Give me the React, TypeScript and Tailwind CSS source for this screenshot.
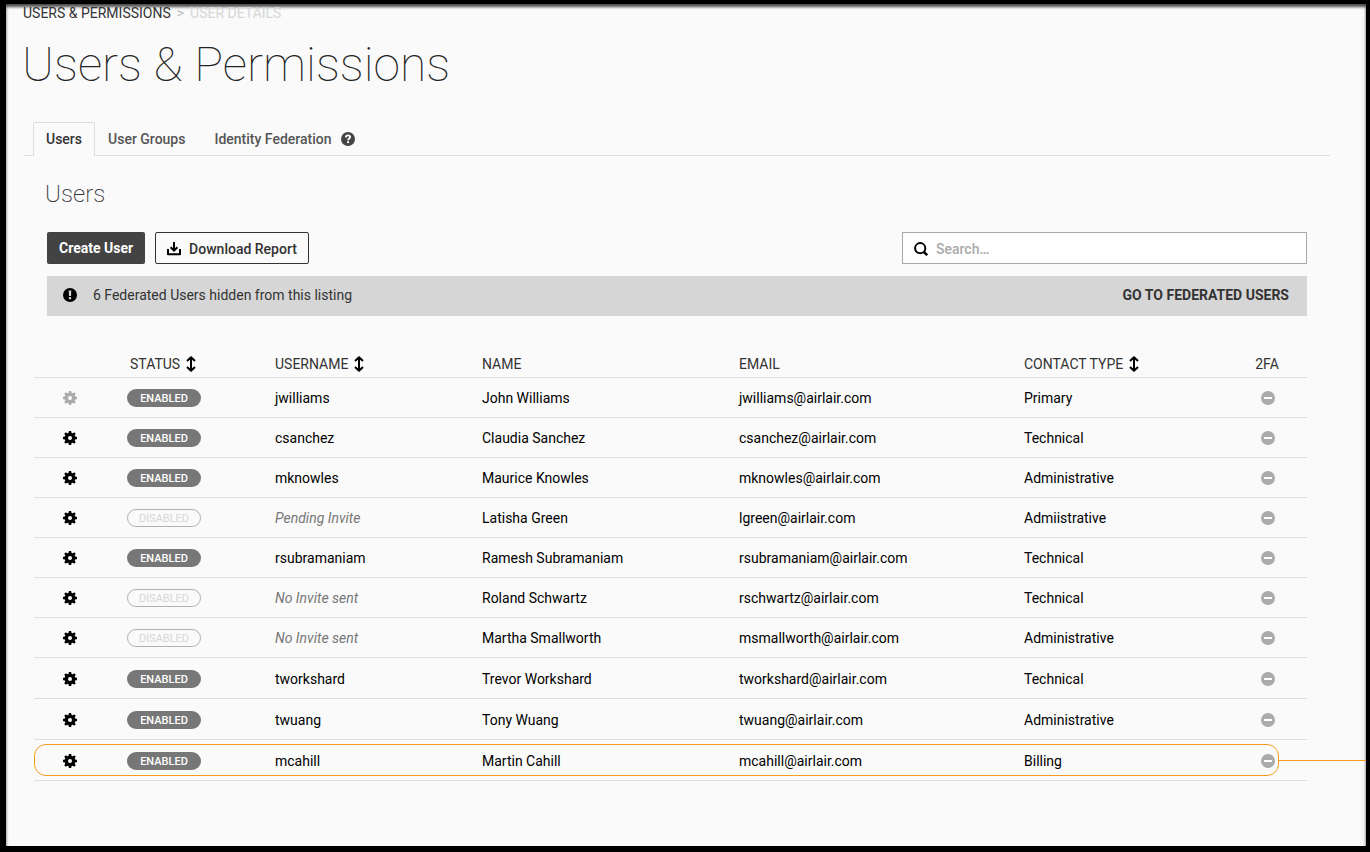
import React from 'react';

type User = {
  username: string;
  invite?: boolean;
  enabled: boolean;
  name: string;
  email: string;
  contact: string;
  locked?: boolean;
  highlighted?: boolean;
  tall?: boolean;
};

const users: User[] = [
  { username: 'jwilliams', enabled: true, name: 'John Williams', email: 'jwilliams@airlair.com', contact: 'Primary', locked: true },
  { username: 'csanchez', enabled: true, name: 'Claudia Sanchez', email: 'csanchez@airlair.com', contact: 'Technical' },
  { username: 'mknowles', enabled: true, name: 'Maurice Knowles', email: 'mknowles@airlair.com', contact: 'Administrative' },
  { username: 'Pending Invite', invite: true, enabled: false, name: 'Latisha Green', email: 'lgreen@airlair.com', contact: 'Admiistrative' },
  { username: 'rsubramaniam', enabled: true, name: 'Ramesh Subramaniam', email: 'rsubramaniam@airlair.com', contact: 'Technical' },
  { username: 'No Invite sent', invite: true, enabled: false, name: 'Roland Schwartz', email: 'rschwartz@airlair.com', contact: 'Technical' },
  { username: 'No Invite sent', invite: true, enabled: false, name: 'Martha Smallworth', email: 'msmallworth@airlair.com', contact: 'Administrative' },
  { username: 'tworkshard', enabled: true, name: 'Trevor Workshard', email: 'tworkshard@airlair.com', contact: 'Technical', tall: true },
  { username: 'twuang', enabled: true, name: 'Tony Wuang', email: 'twuang@airlair.com', contact: 'Administrative', tall: true },
  { username: 'mcahill', enabled: true, name: 'Martin Cahill', email: 'mcahill@airlair.com', contact: 'Billing', tall: true, highlighted: true },
];

const teeth = [0, 45, 90, 135, 180, 225, 270, 315];

function GearIcon() {
  return (
    <svg viewBox="0 0 14 14" className="block size-3.5" aria-hidden="true">
      {teeth.map((angle) => (
        <path key={angle} d="M5.2 3 L5.8 0.3 Q5.9 0 6.2 0 H7.8 Q8.1 0 8.2 0.3 L8.8 3 Z" fill="currentColor" transform={`rotate(${angle} 7 7)`} />
      ))}
      <circle cx="7" cy="7" r="3.6" fill="none" stroke="currentColor" strokeWidth="3.2" />
    </svg>
  );
}

function SortIcon() {
  return (
    <svg viewBox="0 0 10 16" className="block h-4 w-2.5" fill="none" stroke="#000" strokeWidth="2" aria-hidden="true">
      <path d="M5 2V14M1 5L5 1.2L9 5M1 11L5 14.8L9 11" strokeLinejoin="round" />
    </svg>
  );
}

function MinusIcon() {
  return (
    <svg viewBox="0 0 14 14" className="mx-auto block size-3.5" role="img" aria-label="Off">
      <circle cx="7" cy="7" r="7" fill="#ababab" />
      <rect x="3" y="6" width="8" height="2" rx="0.3" fill="#fff" />
    </svg>
  );
}

function HelpIcon() {
  return (
    <svg viewBox="0 0 14 14" className="block size-3.5" aria-hidden="true">
      <circle cx="7" cy="7" r="7" fill="#444" />
      <path d="M4.8 5.4C4.9 4 5.8 3.4 7 3.4C8.3 3.4 9.2 4.1 9.2 5.2C9.2 6.6 7.1 6.6 7.1 8.2" fill="none" stroke="#fff" strokeWidth="1.8" />
      <rect x="6.1" y="9.2" width="2" height="1.9" fill="#fff" />
    </svg>
  );
}

function AlertIcon() {
  return (
    <svg viewBox="0 0 14 14" className="block size-3.5" aria-hidden="true">
      <circle cx="7" cy="7" r="7" fill="#000" />
      <path d="M5.7 2.4H8.3L8 8H6Z" fill="#d6d6d6" />
      <rect x="5.9" y="9" width="2.2" height="2.2" rx="0.5" fill="#d6d6d6" />
    </svg>
  );
}

function DownloadIcon() {
  return (
    <svg viewBox="0 0 14 14" className="block size-3.5" fill="none" stroke="#000" strokeWidth="2" aria-hidden="true">
      <path d="M1 7V12.2H13V7" strokeLinejoin="round" />
      <path d="M7 0V8.2M3.6 5.2L7 8.6L10.4 5.2" />
    </svg>
  );
}

function SearchIcon() {
  return (
    <svg viewBox="0 0 14 14" className="block size-3.5" fill="none" stroke="#000" strokeWidth="2" aria-hidden="true">
      <circle cx="6.2" cy="6.2" r="5.1" />
      <path d="M9.8 9.8L13.2 13.2" strokeWidth="2.4" />
    </svg>
  );
}

function SortButton({ children }: { children: React.ReactNode }) {
  return (
    <button type="button" className="flex items-center gap-1.5 uppercase">
      {children}
      <SortIcon />
    </button>
  );
}

function Status({ enabled }: { enabled: boolean }) {
  return enabled ? (
    <span className="flex h-[18px] w-[74px] items-center justify-center rounded-full bg-[#777] pt-0.5 text-[11px] leading-4 font-medium text-white">ENABLED</span>
  ) : (
    <span className="flex h-[18px] w-[74px] items-center justify-center rounded-full border border-[#b0b0b0] pt-0.5 text-[11px] leading-4 text-[#d6d6d6]">DISABLED</span>
  );
}

function UserRow({ user }: { user: User }) {
  const cell = user.tall ? 'h-[41px] border-b border-[#dedede] p-0 pt-px' : 'h-10 border-b border-[#dedede] p-0';
  return (
    <tr className="relative">
      <td className={cell}>
        <button type="button" disabled={user.locked} aria-label={`Settings for ${user.name}`} className={user.locked ? 'ml-[29px] block text-[#ababab]' : 'ml-[29px] block text-black'}>
          <GearIcon />
        </button>
        {user.highlighted && (
          <>
            <span className="pointer-events-none absolute top-1 right-7 bottom-[5px] left-0 rounded-xl border border-[#f39c1f]" />
            <span className="pointer-events-none absolute top-5 right-[-59px] h-px w-[87px] bg-[#f39c1f]" />
          </>
        )}
      </td>
      <td className={cell}>
        <Status enabled={user.enabled} />
      </td>
      <td className={cell}>{user.invite ? <em className="text-[#777]">{user.username}</em> : user.username}</td>
      <td className={cell}>{user.name}</td>
      <td className={cell}>{user.email}</td>
      <td className={cell}>{user.contact}</td>
      <td className={cell}>
        <MinusIcon />
      </td>
    </tr>
  );
}

export default function App() {
  return (
    <div className="min-h-screen overflow-hidden border-t-4 border-r-4 border-b-6 border-l-6 border-black bg-[#fafafa] pb-[65px] pl-[18px] font-['Roboto',sans-serif] text-sm text-black shadow-[inset_0_3px_3px_rgba(0,0,0,0.7)]">
      <nav aria-label="Breadcrumb" className="-ml-px flex h-[18px] items-center gap-1.5 text-[#d6d6d6]">
        <a href="#users" className="text-[#333]">USERS &amp; PERMISSIONS</a>
        <span className="text-[#bbb]">&gt;</span>
        <span>USER DETAILS</span>
      </nav>
      <h1 className="mt-[11px] -ml-0.5 text-5xl leading-16 font-thin text-[#222]">Users &amp; Permissions</h1>

      <div role="tablist" className="mt-[25px] mr-9 flex border-b border-[#dedede] pl-[9px] font-medium text-[#555]">
        <button type="button" role="tab" aria-selected="true" className="-mb-px h-[34px] rounded-t-xs border border-b-0 border-[#dedede] bg-[#fafafa] px-3 pb-px text-[#333]">
          Users
        </button>
        <button type="button" role="tab" aria-selected="false" className="px-[13px]">
          User Groups
        </button>
        <button type="button" role="tab" aria-selected="false" className="flex items-center gap-2.5 px-4">
          Identity Federation
          <HelpIcon />
        </button>
      </div>

      <main className="mr-[59px] ml-[23px]">
        <h2 className="-ml-0.5 pt-[22px] text-2xl leading-8 font-extralight text-[#333]">Users</h2>
        <div className="mt-[22px] flex items-center">
          <button type="button" className="h-8 rounded-xs bg-[#434343] px-3 font-bold text-white">Create User</button>
          <button type="button" className="ml-2.5 flex h-8 items-center gap-2 rounded-xs border border-[#333] px-[11px] pt-px font-medium text-[#333]">
            <DownloadIcon />
            Download Report
          </button>
          <label className="ml-auto flex h-8 w-[405px] items-center gap-2 border border-[#a8a8a8] bg-white px-[11px] pt-px">
            <SearchIcon />
            <input type="search" aria-label="Search users" placeholder="Search…" className="min-w-0 flex-1 font-medium outline-none placeholder:text-[#aaa]" />
          </label>
        </div>
        <div className="mt-3 flex h-10 items-center bg-[#d6d6d6] px-4 pb-0.5 text-[#333]">
          <AlertIcon />
          <span className="ml-4">6 Federated Users hidden from this listing</span>
          <a href="#federated" className="mr-0.5 ml-auto font-bold">GO TO FEDERATED USERS</a>
        </div>

        <div className="-ml-[13px] pt-[34px]">
          <table className="w-full table-fixed border-separate border-spacing-0 text-left">
            <colgroup>
              <col className="w-[93px]" />
              <col className="w-[148px]" />
              <col className="w-[207px]" />
              <col className="w-[257px]" />
              <col className="w-[285px]" />
              <col className="w-[205px]" />
              <col className="w-[78px]" />
            </colgroup>
            <thead className="text-[#333]">
              <tr>
                <td className="h-7 border-b border-[#dedede] p-0" />
                <th scope="col" className="border-b border-[#dedede] p-0 pl-[3px] font-normal"><SortButton>Status</SortButton></th>
                <th scope="col" className="border-b border-[#dedede] p-0 font-normal"><SortButton>Username</SortButton></th>
                <th scope="col" className="border-b border-[#dedede] p-0 font-normal">NAME</th>
                <th scope="col" className="border-b border-[#dedede] p-0 font-normal">EMAIL</th>
                <th scope="col" className="border-b border-[#dedede] p-0 font-normal"><SortButton>Contact Type</SortButton></th>
                <th scope="col" className="border-b border-[#dedede] p-0 pr-0.5 text-center font-normal">2FA</th>
              </tr>
            </thead>
            <tbody>
              {users.map((user) => (
                <UserRow key={user.email} user={user} />
              ))}
            </tbody>
          </table>
        </div>
      </main>
    </div>
  );
}
